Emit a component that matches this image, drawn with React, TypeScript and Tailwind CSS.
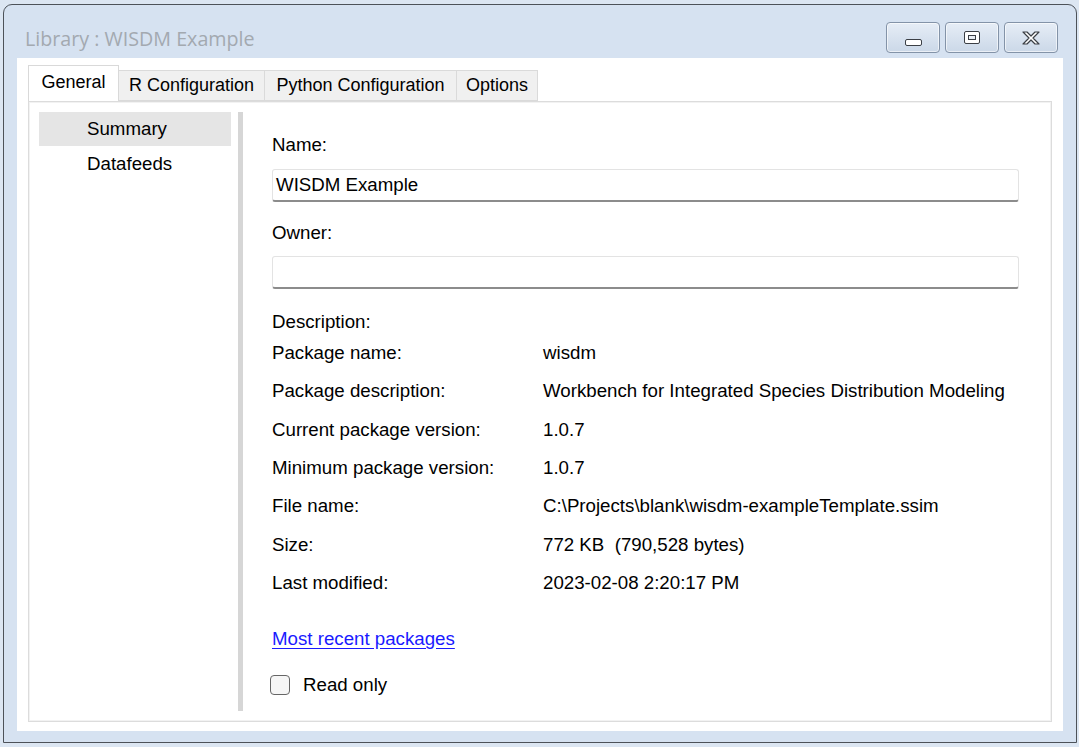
import React from "react";

const rows: [string, string][] = [
  ["Package name:", "wisdm"],
  ["Package description:", "Workbench for Integrated Species Distribution Modeling"],
  ["Current package version:", "1.0.7"],
  ["Minimum package version:", "1.0.7"],
  ["File name:", "C:\\Projects\\blank\\wisdm-exampleTemplate.ssim"],
  ["Size:", "772 KB  (790,528 bytes)"],
  ["Last modified:", "2023-02-08 2:20:17 PM"],
];

function WinButton({ children }: { children: React.ReactNode }) {
  return (
    <div className="w-[54px] h-[31px] rounded-[4px] border border-[#8393a8] bg-gradient-to-b from-[#e6edf6] to-[#cbd8e8] flex items-center justify-center shadow-[inset_0_0_0_1px_rgba(255,255,255,0.6)]">
      {children}
    </div>
  );
}

export default function App() {
  return (
    <div
      className="w-[1079px] h-[747px] bg-[#dce6f2] pl-[3px] pr-[2px] pt-[4px] pb-[4px] text-black"
      style={{ fontFamily: '"Liberation Sans", Arial, sans-serif' }}
    >
      <div className="h-full border border-[#4d5259] rounded-t-[9px] bg-[#d6e2f1] flex flex-col px-[13px] pb-[11px]">
        {/* title bar */}
        <div className="h-[53px] flex items-start justify-between shrink-0">
          <div
            className="pt-[19px] pl-[8px] text-[19.7px] text-[#a3a9b0]"
            style={{ fontFamily: '"Open Sans", "Noto Sans", sans-serif' }}
          >
            Library : WISDM Example
          </div>
          <div className="flex gap-[5px] pt-[17px] pr-[5px]">
            <WinButton>
              <div className="mt-[9px] w-[17px] h-[7px] rounded-[2px] border border-[#3b3f45] bg-white" />
            </WinButton>
            <WinButton>
              <div className="w-[16px] h-[13px] rounded-[2px] border border-[#3b3f45] bg-white flex items-center justify-center">
                <div className="w-[8px] h-[5px] border border-[#3b3f45] bg-[#e9eef5]" />
              </div>
            </WinButton>
            <WinButton>
              <svg width="20" height="16" viewBox="0 0 20 16">
                <path
                  d="M2 2 L6 2 L10 6 L14 2 L18 2 L12 8 L18 14 L14 14 L10 10 L6 14 L2 14 L8 8 Z"
                  fill="#ffffff"
                  stroke="#3b3f45"
                  strokeWidth="1.2"
                  strokeLinejoin="round"
                />
              </svg>
            </WinButton>
          </div>
        </div>

        {/* client area */}
        <div className="flex-1 bg-white pt-[8px] px-[11px] pb-[9px] flex flex-col">
          {/* tabs */}
          <div className="flex items-end h-[35px] shrink-0 text-[18px] relative z-10">
            <div className="w-[91px] h-[36px] bg-white border border-b-0 border-[#d9d9d9] flex items-center justify-center pb-[2px]">
              General
            </div>
            <div className="w-[146px] h-[31px] bg-[#f0f0f0] border border-l-0 border-[#dadada] flex items-center justify-center">
              R Configuration
            </div>
            <div className="w-[192px] h-[31px] bg-[#f0f0f0] border border-l-0 border-[#dadada] flex items-center justify-center">
              Python Configuration
            </div>
            <div className="w-[81px] h-[31px] bg-[#f0f0f0] border border-l-0 border-[#dadada] flex items-center justify-center">
              Options
            </div>
          </div>

          {/* panel */}
          <div className="flex-1 border border-[#dcdcdc] shadow-[inset_0_0_0_1px_#f2f2f2] p-[10px] pb-[10px] flex text-[18.7px]">
            <div className="w-[192px] shrink-0">
              <div className="h-[34px] bg-[#e5e5e5] flex items-center pl-[48px]">Summary</div>
              <div className="h-[34px] flex items-center pl-[48px] mt-[1px]">Datafeeds</div>
            </div>
            <div className="w-[5px] ml-[7px] bg-[#d6d6d6] shrink-0" />
            <div className="flex-1 pl-[29px] pr-[22px] pt-[22px]">
              <div className="h-[22px] leading-[22px]">Name:</div>
              <div className="mt-[13px] h-[33px] rounded-[3px] border border-[#e3e3e3] border-b-[2px] border-b-[#8c8c8c] flex items-center pl-[3px]">
                WISDM Example
              </div>
              <div className="mt-[20px] h-[22px] leading-[22px]">Owner:</div>
              <div className="mt-[12px] h-[33px] rounded-[3px] border border-[#e3e3e3] border-b-[2px] border-b-[#8c8c8c]" />
              <div className="mt-[22px] h-[22px] leading-[22px]">Description:</div>
              <div className="mt-[1px]">
                {rows.map(([k, v]) => (
                  <div key={k} className="h-[38.3px] flex items-center">
                    <div className="w-[271px] shrink-0">{k}</div>
                    <div className="whitespace-pre">{v}</div>
                  </div>
                ))}
              </div>
              <div className="mt-[26px] h-[22px] leading-[22px]">
                <span className="text-[#1a1aff] underline underline-offset-[3px]">Most recent packages</span>
              </div>
              <div className="mt-[24px] h-[22px] flex items-center">
                <div className="ml-[-2px] w-[20px] h-[20px] rounded-[4px] border-[1.5px] border-[#666666] bg-[#f6f6f6]" />
                <span className="ml-[13px]">Read only</span>
              </div>
            </div>
          </div>
        </div>
      </div>
    </div>
  );
}
